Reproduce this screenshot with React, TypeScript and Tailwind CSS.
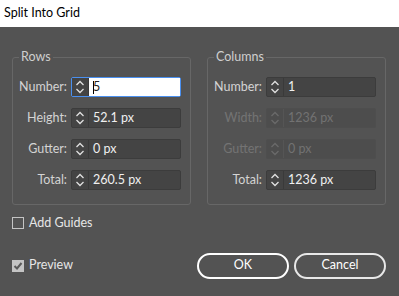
import React from 'react';

type FieldProps = {
  label: string;
  value: string;
  focused?: boolean;
  disabled?: boolean;
};

function Stepper({ disabled }: { disabled?: boolean }) {
  const c = disabled ? '#6a6a6a' : '#e0e0e0';
  return (
    <svg width="10" height="16" viewBox="0 0 10 16" fill="none">
      <path d="M1.5 6 L5 2.5 L8.5 6" stroke={c} strokeWidth="1.3" />
      <path d="M1.5 10 L5 13.5 L8.5 10" stroke={c} strokeWidth="1.3" />
    </svg>
  );
}

function Field({ label, value, focused, disabled }: FieldProps) {
  return (
    <div className="flex items-center gap-[4px]">
      <span
        className={`w-[54px] text-right ${disabled ? 'text-[#737373]' : 'text-[#d4d4d4]'}`}
      >
        {label}
      </span>
      <div
        className={`flex h-[20px] w-[110px] rounded-[2px] border ${
          focused
            ? 'border-[#4a90f0]'
            : disabled
              ? 'border-[#4e4e4e] bg-[#4d4d4d]'
              : 'border-[#3c3c3c] bg-[#444444]'
        }`}
      >
        <div
          className={`flex w-[17px] shrink-0 items-center justify-center border-r ${
            disabled ? 'border-[#555]' : 'border-[#3a3a3a]'
          } ${focused ? 'bg-[#444444]' : ''}`}
        >
          <Stepper disabled={disabled} />
        </div>
        <div
          className={`flex flex-1 items-center pl-[4px] ${
            focused ? 'bg-white text-[#222]' : disabled ? 'text-[#727272]' : 'text-[#f0f0f0]'
          }`}
        >
          {focused && <span className="mr-[-1px] inline-block h-[13px] w-px bg-black" />}
          {value}
        </div>
      </div>
    </div>
  );
}

function Group({ title, children }: { title: string; children: React.ReactNode }) {
  return (
    <fieldset className="w-[179px] rounded-[3px] border border-[#676767] pb-[14px] pt-[12px]">
      <legend className="ml-[6px] px-[2px] leading-[16px] text-[#cfcfcf]">{title}</legend>
      <div className="flex flex-col gap-[11px]">{children}</div>
    </fieldset>
  );
}

export default function App() {
  return (
    <div
      className="flex h-[296px] w-[399px] flex-col bg-[#535353] text-[12.5px]"
      style={{ fontFamily: 'Lato, "Noto Sans", sans-serif' }}
    >
      <div className="flex h-[27px] items-center bg-white pl-[4px] text-black">
        Split Into Grid
      </div>

      <div className="flex gap-[16px] pl-[12px] pt-[22px]">
        <Group title="Rows">
          <Field label="Number:" value="5" focused />
          <Field label="Height:" value="52.1 px" />
          <Field label="Gutter:" value="0 px" />
          <Field label="Total:" value="260.5 px" />
        </Group>
        <Group title="Columns">
          <Field label="Number:" value="1" />
          <Field label="Width:" value="1236 px" disabled />
          <Field label="Gutter:" value="0 px" disabled />
          <Field label="Total:" value="1236 px" />
        </Group>
      </div>

      <div className="mt-[9px] flex items-center gap-[5px] pl-[12px] text-[#e6e6e6]">
        <span className="h-[12px] w-[12px] border border-[#c4c4c4]" />
        Add Guides
      </div>

      <div className="mt-[20px] flex items-center pl-[12px] pr-[13px]">
        <div className="flex items-center gap-[5px] text-[#e6e6e6]">
          <span className="flex h-[12px] w-[12px] items-center justify-center bg-[#c4c4c4]">
            <svg width="10" height="10" viewBox="0 0 10 10">
              <path d="M1.5 5 L4 7.5 L8.5 2" stroke="#5a5a5a" strokeWidth="2" fill="none" />
            </svg>
          </span>
          Preview
        </div>
        <div className="ml-auto flex gap-[5px]">
          <button className="h-[26px] w-[92px] rounded-full border-2 border-white text-white">
            OK
          </button>
          <button className="h-[26px] w-[92px] rounded-full border-2 border-[#e8e8e8] text-white">
            Cancel
          </button>
        </div>
      </div>
    </div>
  );
}
